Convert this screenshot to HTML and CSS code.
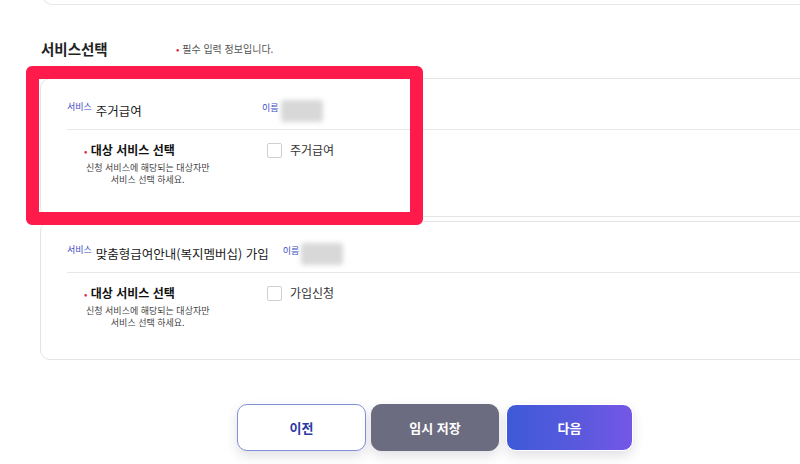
FILE: index.html
```html
<!DOCTYPE html>
<html lang="ko">
<head>
<meta charset="utf-8">
<title>서비스선택</title>
<link rel="stylesheet" href="styles.css">
</head>
<body>
<div class="page">
  <div class="prev-card"></div>

  <div class="section-head">
    <h2 class="section-title">서비스선택</h2>
    <p class="req-note"><span class="req-dot">•</span> 필수 입력 정보입니다.</p>
  </div>

  <div class="cards">
    <div class="card">
      <div class="card-head">
        <div class="svc">
          <span class="tag">서비스</span>
          <span class="svc-name">주거급여</span>
        </div>
        <div class="person">
          <span class="tag">이름</span>
          <span class="masked"></span>
        </div>
      </div>
      <div class="card-body">
        <div class="label-col">
          <div class="field-title"><span class="req-dot">•</span> 대상 서비스 선택</div>
          <div class="field-help">신청 서비스에 해당되는 대상자만<br>서비스 선택 하세요.</div>
        </div>
        <label class="check">
          <span class="box"></span>
          <span class="check-text">주거급여</span>
        </label>
      </div>
    </div>

    <div class="card">
      <div class="card-head">
        <div class="svc">
          <span class="tag">서비스</span>
          <span class="svc-name">맞춤형급여안내(복지멤버십) 가입</span>
        </div>
        <div class="person">
          <span class="tag">이름</span>
          <span class="masked"></span>
        </div>
      </div>
      <div class="card-body">
        <div class="label-col">
          <div class="field-title"><span class="req-dot">•</span> 대상 서비스 선택</div>
          <div class="field-help">신청 서비스에 해당되는 대상자만<br>서비스 선택 하세요.</div>
        </div>
        <label class="check">
          <span class="box"></span>
          <span class="check-text">가입신청</span>
        </label>
      </div>
    </div>
  </div>

  <div class="actions">
    <button class="btn btn-prev">이전</button>
    <button class="btn btn-save">임시 저장</button>
    <button class="btn btn-next">다음</button>
  </div>

  <div class="highlight"></div>
</div>
</body>
</html>
```

FILE: styles.css
```css
* { box-sizing: border-box; }

html, body {
  margin: 0;
  padding: 0;
  background: #fff;
}

body {
  width: 800px;
  height: 464px;
  overflow: hidden;
  font-family: "Noto Sans CJK KR", "Noto Sans", sans-serif;
  color: #222;
}

.page {
  position: relative;
  width: 800px;
  height: 464px;
  overflow: hidden;
}

.prev-card {
  margin-left: 42px;
  margin-top: -10px;
  width: 800px;
  height: 15px;
  border: 1px solid #e6e6e6;
  border-top: none;
  border-radius: 0 0 0 10px;
}

.section-head {
  display: flex;
  align-items: center;
  margin-top: 34px;
  padding-left: 41px;
  height: 20px;
}

.section-title {
  margin: 0;
  width: 135px;
  font-size: 14.5px;
  line-height: 20px;
  font-weight: 700;
  color: #222;
}

.req-note {
  margin: 0;
  font-size: 10px;
  line-height: 14px;
  color: #555;
}

.req-dot {
  color: #e0243c;
}

.cards {
  display: flex;
  flex-direction: column;
  gap: 4px;
  margin-top: 19px;
  padding-left: 40px;
}

.card {
  width: 820px;
  border: 1px solid #e4e4e4;
  border-radius: 10px;
  background: #fff;
}

.card-head {
  display: flex;
  align-items: center;
  margin-left: 26px;
  padding: 21px 0 7px;
  border-bottom: 1px solid #e8e8e8;
}

.svc {
  display: flex;
  align-items: center;
  min-width: 181px;
  margin-right: 14px;
}

.tag {
  font-size: 9px;
  line-height: 12px;
  color: #3b4cc4;
  margin-right: 4px;
  align-self: flex-start;
  margin-top: 1px;
}

.svc-name {
  font-size: 12.5px;
  line-height: 22px;
  color: #1a1a1a;
}

.person {
  display: flex;
  align-items: flex-start;
  height: 22px;
}

.person .tag {
  font-size: 9px;
  margin-right: 2px;
  margin-top: 2px;
}

.masked {
  display: inline-block;
  width: 42px;
  height: 22px;
  background: #d8d8d8;
  border-radius: 3px;
  filter: blur(2.5px);
}

.card-body {
  display: flex;
  align-items: flex-start;
  padding: 11px 0 30px 43px;
}

.label-col {
  width: 183px;
}

.field-title {
  font-size: 12px;
  line-height: 18px;
  font-weight: 700;
  color: #111;
}

.field-title .req-dot {
  font-weight: 400;
  font-size: 10px;
}

.field-help {
  display: block;
  width: fit-content;
  margin-top: 2px;
  margin-left: 2px;
  font-size: 9px;
  line-height: 12px;
  text-align: center;
  color: #444;
}

.check {
  display: flex;
  align-items: center;
  gap: 8px;
  height: 18px;
}

.box {
  display: inline-block;
  width: 15px;
  height: 15px;
  border: 1px solid #cfcfcf;
  border-radius: 2px;
  background: #fff;
}

.check-text {
  font-size: 12px;
  line-height: 18px;
  color: #333;
}

.actions {
  display: flex;
  gap: 5px;
  margin-top: 44px;
  padding-left: 237px;
}

.btn {
  width: 129px;
  height: 47px;
  border-radius: 10px;
  font-family: "Noto Sans CJK KR", "Noto Sans", sans-serif;
  font-size: 13px;
  font-weight: 700;
  border: 1px solid transparent;
  box-shadow: 0 5px 12px rgba(40, 40, 80, 0.14);
  cursor: pointer;
}

.btn-prev {
  background: #fff;
  border-color: #8190da;
  color: #2c3aa6;
}

.btn-save {
  width: 128px;
  background: #6c6c80;
  border-color: #6c6c80;
  color: #fff;
}

.btn-next {
  width: 127px;
  margin-left: 2px;
  background: linear-gradient(90deg, #3d5ad8 0%, #5659dc 50%, #7457e6 100%);
  border: 1px solid #fff;
  color: #fff;
}

.highlight {
  position: absolute;
  left: 26px;
  top: 66px;
  width: 397px;
  height: 159px;
  border: 13px solid #fe1a4b;
  border-radius: 6px;
  pointer-events: none;
}
```
